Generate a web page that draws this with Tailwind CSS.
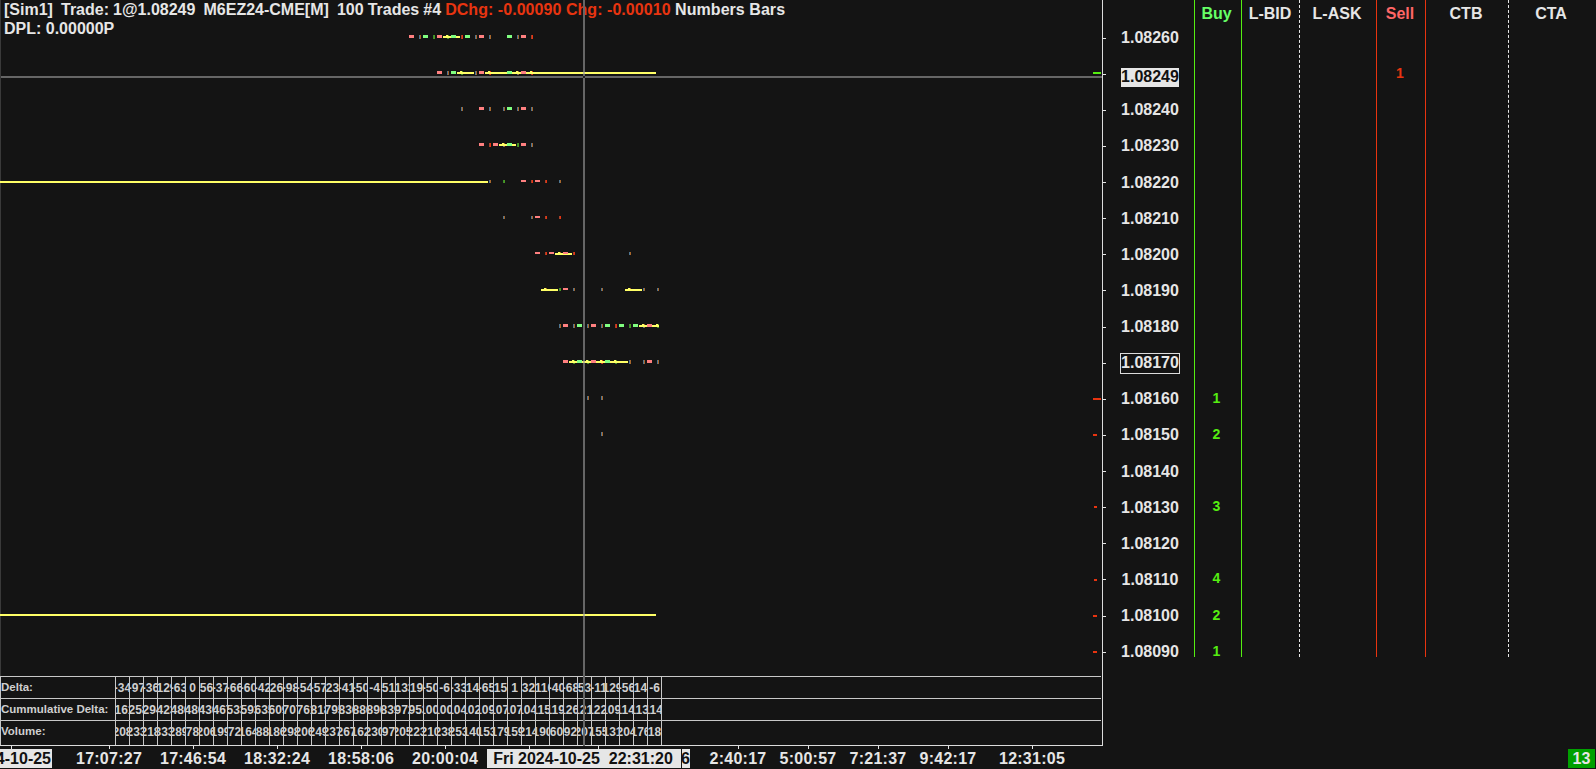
<!DOCTYPE html>
<html lang="en">
  <head>
    <meta charset="UTF-8" />
    <title>M6EZ24-CME Numbers Bars</title>
    <script src="https://cdn.jsdelivr.net/npm/@tailwindcss/browser@4"></script>
  </head>
  <body class="bg-[#141414] h-[769px] w-[1596px] overflow-hidden font-['Liberation_Sans',Arial,sans-serif] font-bold text-[#e6e6e6] text-[16px]">
    <div class="relative h-[769px]">
      <div class="flex h-[746px]">
        <!-- chart -->
        <div class="w-[1103px] flex flex-col border-r border-b border-[#dcdcdc]">
          <div class="relative h-[676px] border-l border-[#3a3a3a]">
            <svg id="marks" class="absolute left-[-1px] top-0" width="1102" height="676" shape-rendering="crispEdges"></svg>
            <div class="relative pl-[3px] leading-[19px]">
              <div class="whitespace-pre"><span class="[word-spacing:-0.4px]">[Sim1]  Trade: 1@1.08249  M6EZ24-CME[M]  100 Trades #4 </span><span class="tracking-[0.05px]"><span class="text-[#e83410]">DChg: -0.00090 Chg: -0.00010</span> Numbers Bars</span></div>
              <div class="whitespace-pre">DPL: 0.00000P</div>
            </div>
          </div>
          <div id="studies" class="h-[69px] border-l border-[#c8c8c8] text-[#cfcfcf]"></div>
        </div>

        <!-- price ladder -->
        <div id="ladder" class="flex-1 flex h-[657px] overflow-hidden"></div>
      </div>

      <!-- time axis -->
      <div id="axis" class="relative h-[23px]">
        <div class="absolute left-0 top-[3px] w-[52px] h-[19px] bg-[#e6e6e6] text-[#111] flex justify-end items-center overflow-hidden pr-px">
          <span class="shrink-0">Fri 2024-10-25</span>
        </div>
        <div class="absolute left-[487px] top-[3px] w-[194px] h-[19px] bg-[#e6e6e6] text-[#111] flex justify-center items-center whitespace-pre pr-[2px]">Fri 2024-10-25  22:31:20</div>
        <div class="absolute left-[682px] top-[3px] w-[8px] h-[19px] bg-[#e6e6e6] text-[#111] flex justify-end items-center overflow-hidden">
          <span class="shrink-0">6</span>
        </div>
        <div class="absolute left-[1568px] top-[3px] w-[27px] h-[19px] bg-[#00a000] flex justify-center items-center">13</div>
      </div>

      <!-- crosshair -->
      <div class="absolute left-px top-[76px] w-[1101px] h-[2px] bg-[#666]"></div>
      <div class="absolute left-[583px] top-0 w-[2px] h-[746px] bg-[#666]"></div>
      <div class="absolute left-[583px] top-[76px] w-[2px] h-[2px] bg-[#222]"></div>
      <div class="absolute left-[583px] top-[72px] w-[2px] h-[2px] bg-[#bdbd8c]"></div>
      <div class="absolute left-[583px] top-[361px] w-[2px] h-[2px] bg-[#bdbd8c]"></div>
      <div class="absolute left-[583px] top-[614px] w-[2px] h-[2px] bg-[#bdbd8c]"></div>
    </div>

    <script>
      const cellX = (c) => 115 + 14 * c;

      // footprint rows: top y, box/tick height, boxes, ticks, point of control bars
      const rows = [
        { y: 35, h: 3, boxes: "21p 22g 23p 24g 25g 26p 28g 29p", ticks: "21b 22g 23g 24r 25b 26b 28b 29r", bars: [[443, 460]] },
        { y: 71, h: 3, boxes: "23p 24g 26p 28g 29p", ticks: "23b 24g 25b 26r 28b 29r", bars: [[457, 474], [485, 656]] },
        { y: 107, h: 3, boxes: "26p 28g 29p", ticks: "24b 26b 27b 28b 29b", bars: [] },
        { y: 143, h: 3, boxes: "26p 27p 28g 29p", ticks: "26r 27b 28g 29b", bars: [[499, 516]] },
        { y: 180, h: 2, boxes: "29p 30p", ticks: "26b 27g 29r 30r 31b", bars: [[0, 488]], barY: 181 },
        { y: 216, h: 2, boxes: "30p", ticks: "27b 29b 30r 31r", bars: [] },
        { y: 252, h: 2, boxes: "30p 31p 32p", ticks: "30r 31b 32r 36b", bars: [[555, 572]] },
        { y: 288, h: 2, boxes: "32p", ticks: "30b 31g 32b 34b 36b 37b 38b", bars: [[541, 558], [625, 642]] },
        { y: 324, h: 3, boxes: "32p 33g 34p 35g 36g 37g 38p", ticks: "31b 32b 33b 34b 35r 36g 37b 38g", bars: [[639, 659]] },
        { y: 360, h: 3, boxes: "32p 33g 34p 35g 38p", ticks: "32g 33g 34r 35g 36b 37b 38b", bars: [[569, 628]] },
        { y: 396, h: 3, boxes: "", ticks: "33b 34b", bars: [] },
        { y: 432, h: 3, boxes: "", ticks: "34b", bars: [] },
        { y: 613, h: 2, boxes: "", ticks: "", bars: [[0, 656]], barY: 614 },
      ];

      const tickColors = {
        b: ["#4f7590", "#a8662a"],
        r: ["#a8402a", "#e83410"],
        g: ["#3c8c2c", "#4a9a20"],
      };
      const list = (s) => s.split(" ").filter(Boolean).map((t) => [parseInt(t), t.slice(-1)]);
      const rect = (x, y, w, h, fill) => `<rect x="${x}" y="${y}" width="${w}" height="${h}" fill="${fill}"/>`;

      let marks = "";
      rows.forEach((r) => {
        const ticks = list(r.ticks);
        const barY = r.barY ?? r.y + 1;
        ticks.forEach(([c, k]) => {
          const x = cellX(c) + 10;
          marks += rect(x, r.y, 1, r.h + 1, tickColors[k][0]);
          marks += rect(x + 1, r.y, 1, r.h + 1, tickColors[k][1]);
        });
        r.bars.forEach(([a, b]) => {
          marks += rect(a, barY, b - a, 2, "#ffff66");
          ticks.forEach(([c]) => {
            const x = cellX(c) + 9;
            if (x >= a && x < b) marks += rect(x, barY - 1, 2, 1, "#ffff66");
          });
        });
        list(r.boxes).forEach(([c, k]) => {
          marks += rect(cellX(c), r.y, 5, r.h, k === "p" ? "#ff8080" : "#80ff80");
        });
      });

      // depth marks left of the price axis
      [[1093, 72, 8, "#55ee11"], [1093, 398, 8, "#e83410"], [1093, 434, 4, "#e83410"], [1094, 506, 3, "#e83410"], [1094, 579, 3, "#e83410"], [1093, 615, 4, "#e83410"], [1093, 651, 4, "#e83410"]].forEach(
        ([x, y, w, c]) => (marks += rect(x, y, w, 2, c))
      );
      document.getElementById("marks").innerHTML = marks;

      // study rows under the chart
      const delta = [-34, -97, -36, -129, -63, 0, 56, -37, -66, -60, -42, 26, -98, -54, -57, 23, -41, -50, -4, 51, -133, 19, -50, -6, -33, 14, -65, 15, 1, 32, -110, -40, -68, 53, -11, 129, -56, 14, -6];
      let sum = -127;
      const cumulative = delta.map((d) => (sum += d));
      const volume = [208, 233, 218, 333, 289, 78, 206, 199, 72, 164, 88, 186, 298, 206, 249, 237, 267, 162, 230, 97, 205, 223, 210, 238, 253, 140, 153, 179, 159, 214, 190, 60, 92, 207, 155, 131, 204, 176, 18];

      const studyRow = (label, values, height, pad) => `
        <div class="flex border-t border-[#c8c8c8] mr-px ${height}">
          <div class="w-[114px] shrink-0 flex items-center text-[11.5px] whitespace-nowrap ${pad}">${label}</div>
          ${values
            .map(
              (v) => `<div class="w-[14px] shrink-0 border-l border-[#c8c8c8] flex justify-center items-center overflow-hidden text-[12px] ${pad}"><span class="shrink-0">${v}</span></div>`
            )
            .join("")}
          <div class="w-0 border-l border-[#c8c8c8]"></div>
        </div>`;
      document.getElementById("studies").innerHTML =
        studyRow("Delta:", delta, "h-[22px]", "") +
        studyRow("Cummulative Delta:", cumulative, "h-[22px]", "") +
        studyRow("Volume:", volume, "h-[25px]", "pb-[3px]");

      // price ladder
      const prices = ["1.08260", "1.08249", "1.08240", "1.08230", "1.08220", "1.08210", "1.08200", "1.08190", "1.08180", "1.08170", "1.08160", "1.08150", "1.08140", "1.08130", "1.08120", "1.08110", "1.08100", "1.08090"];
      const buy = { 10: 1, 11: 2, 13: 3, 15: 4, 16: 2, 17: 1 };
      const sell = { 1: 1 };
      const ladderRow = "h-[36.125px] flex items-center justify-center text-[14px] pb-[2px]";

      const priceCol = prices
        .map((p, i) => {
          const label =
            i === 1
              ? "bg-[#e6e6e6] text-[#111] w-[58px] h-[19px] relative top-[3px]"
              : i === 9
                ? "border border-[#dcdcdc] w-[60px] h-[21px]"
                : "";
          return `<div class="h-[36.125px] flex items-center">
            <div class="w-[3px] h-px bg-[#e6e6e6]"></div>
            <div class="flex-1 flex justify-center"><span class="flex items-center justify-center ${label}">${p}</span></div>
          </div>`;
        })
        .join("");
      const valueCol = (values, color) =>
        prices.map((p, i) => `<div class="${ladderRow} ${color}">${values[i] ?? ""}</div>`).join("");
      const header = (text, color) => `<div class="h-[20px] leading-[27px] text-center ${color}">${text}</div>`;

      document.getElementById("ladder").innerHTML = `
        <div class="w-[91px]">${header("", "")}${priceCol}</div>
        <div class="w-[47px] border-l border-[#55ee11] pr-[3px]">${header("Buy", "text-[#66ff66]")}${valueCol(buy, "text-[#55ee11]")}</div>
        <div class="w-[58px] border-l border-[#55ee11] pr-[1px]">${header("L-BID", "")}</div>
        <div class="w-[77px] border-l border-dashed border-[#e6e6e6] pr-[2px]">${header("L-ASK", "")}</div>
        <div class="w-[49px] border-l border-[#e83410] pr-[2px]">${header("Sell", "text-[#ff6666]")}${valueCol(sell, "text-[#e83410]")}</div>
        <div class="w-[83px] border-l border-[#e83410] pr-[2px]">${header("CTB", "")}</div>
        <div class="flex-1 border-l border-dashed border-[#e6e6e6] pr-[3px]">${header("CTA", "")}</div>`;

      // time axis ticks and labels
      const times = [[11, ""], [109, "17:07:27"], [193, "17:46:54"], [277, "18:32:24"], [361, "18:58:06"], [445, "20:00:04"], [529, ""], [598, ""], [738, "2:40:17"], [808, "5:00:57"], [878, "7:21:37"], [948, "9:42:17"], [1032, "12:31:05"]];
      const axis = document.getElementById("axis");
      times.forEach(([x, t]) => {
        const tick = document.createElement("div");
        tick.className = "absolute top-0 w-px h-[3px] bg-[#e6e6e6]";
        tick.style.left = x + "px";
        axis.appendChild(tick);
        if (!t) return;
        const label = document.createElement("div");
        label.className = "absolute top-[3px] h-[19px] leading-[19px] -translate-x-1/2 whitespace-nowrap tracking-[0.25px]";
        label.style.left = x + "px";
        label.textContent = t;
        axis.appendChild(label);
      });
    </script>
  </body>
</html>
